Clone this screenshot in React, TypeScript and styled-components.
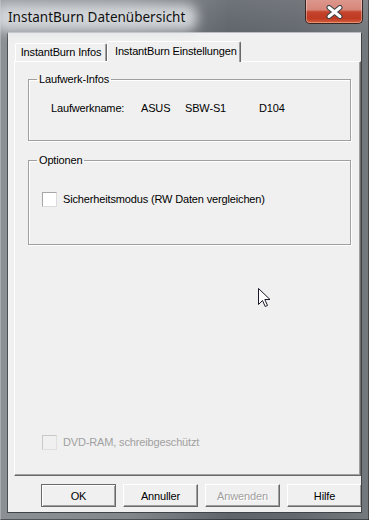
import React from "react";
import styled, { createGlobalStyle } from "styled-components";

const Global = createGlobalStyle`
  html, body { margin: 0; padding: 0; background: #6b7075; }
  * { box-sizing: border-box; }
`;

const Window = styled.div`
  position: relative;
  width: 369px;
  height: 520px;
  display: flex;
  flex-direction: column;
  padding: 0 7px 7px 7px;
  overflow: hidden;
  font-family: "Liberation Sans", Arial, sans-serif;
  font-size: 11px;
  letter-spacing: -0.15px;
  color: #000;
  background:
    linear-gradient(to bottom, rgba(255,255,255,0.10), rgba(255,255,255,0) 36px),
    linear-gradient(to right, #8b9095 0%, #82878c 35%, #5e646a 62%, #63686e 80%, #74797e 100%);
  box-shadow: inset 1px 0 0 rgba(255,255,255,0.25), inset -1px 0 0 rgba(0,0,0,0.4), inset 0 -1px 0 rgba(0,0,0,0.4);
`;

const TitleBar = styled.div`
  height: 32px;
  flex: none;
  display: flex;
  align-items: flex-start;
  justify-content: space-between;
`;

const Title = styled.div`
  position: relative;
  z-index: 0;
  margin-top: 8px;
  margin-left: 1px;
  font-family: "Noto Sans", "Open Sans", sans-serif;
  font-size: 13.5px;
  letter-spacing: 0;
  line-height: 18px;
  color: #111;
  white-space: nowrap;
  &::before {
    content: "";
    position: absolute;
    z-index: -1;
    left: -14px;
    right: -12px;
    top: -4px;
    bottom: -5px;
    background: rgba(214, 217, 220, 0.95);
    border-radius: 10px;
    filter: blur(6px);
  }
`;

const CloseButton = styled.div`
  width: 58px;
  height: 24px;
  margin-right: -1px;
  display: flex;
  align-items: center;
  justify-content: center;
  border: 1px solid #3a2420;
  border-top: none;
  border-radius: 0 0 5px 5px;
  background: linear-gradient(to bottom, #dc968b 0%, #d7877a 42%, #c4442c 52%, #bf3a22 80%, #d2603f 100%);
  box-shadow: inset 0 -1px 0 rgba(255,200,170,0.5), inset 1px 0 0 rgba(255,255,255,0.35), inset -1px 0 0 rgba(255,255,255,0.35);
`;

const Client = styled.div`
  flex: 1;
  display: flex;
  flex-direction: column;
  background: #f0f0f0;
  border: 1px solid #3f4449;
  border-top-color: #b9bcc0;
  border-left-color: #4a4f54;
  overflow: hidden;
  padding-top: 8px;
`;

const TabStrip = styled.div`
  display: flex;
  align-items: flex-end;
  height: 20px;
  padding-left: 7px;
  position: relative;
  z-index: 1;
`;

const Tab = styled.div<{ $active?: boolean; $w: number }>`
  height: ${(p) => (p.$active ? 21 : 18)}px;
  width: ${(p) => p.$w}px;
  display: flex;
  align-items: center;
  justify-content: ${(p) => (p.$active ? "flex-start" : "center")};
  padding-left: ${(p) => (p.$active ? 7 : 0)}px;
  padding-bottom: ${(p) => (p.$active ? 3 : 1)}px;
  background: #f0f0f0;
  border-top: 1px solid #fff;
  border-left: 1px solid #fff;
  border-right: 1px solid #696969;
  box-shadow: inset -1px 0 0 #a0a0a0;
  border-radius: 2px 2px 0 0;
  margin-bottom: ${(p) => (p.$active ? -1 : 0)}px;
  white-space: nowrap;
`;

const Panel = styled.div`
  margin-left: 6px;
  height: 415px;
  display: flex;
  flex-direction: column;
  padding: 0 9px 25px 13px;
  background: #f0f0f0;
  border-top: 1px solid #fff;
  border-left: 1px solid #fff;
  border-right: 1px solid #696969;
  border-bottom: 1px solid #696969;
  box-shadow: inset -1px -1px 0 #a0a0a0;
`;

const Group = styled.fieldset<{ $h: number; $mt: number }>`
  margin: ${(p) => p.$mt}px 0 0 0;
  padding: 0;
  min-width: 0;
  height: ${(p) => p.$h}px;
  flex: none;
  border: 1px solid #a0a0a0;
  box-shadow: 1px 1px 0 #fff, inset 1px 1px 0 #fff;
`;

const Legend = styled.legend`
  margin-left: 8px;
  padding: 0 2px;
  line-height: 13px;
`;

const InfoRow = styled.div`
  display: grid;
  grid-template-columns: 90px 44px 74px auto;
  margin: 16px 0 0 22px;
  line-height: 13px;
`;

const CheckRow = styled.label<{ $disabled?: boolean; $indent: number; $mt?: number }>`
  display: flex;
  align-items: center;
  gap: 6px;
  margin: ${(p) => p.$mt ?? 0}px 0 0 ${(p) => p.$indent}px;
  color: ${(p) => (p.$disabled ? "#a0a0a0" : "#000")};
  line-height: 13px;
`;

const Box = styled.span<{ $disabled?: boolean }>`
  width: 15px;
  height: 15px;
  flex: none;
  background: ${(p) => (p.$disabled ? "#f0f0f0" : "#fff")};
  border: 1px solid ${(p) => (p.$disabled ? "#c8c8c8" : "#a6a6a6")};
  border-right-color: ${(p) => (p.$disabled ? "#e0e0e0" : "#dcdcdc")};
  border-bottom-color: ${(p) => (p.$disabled ? "#e0e0e0" : "#dcdcdc")};
`;

const Spacer = styled.div`
  flex: 1;
`;

const ButtonRow = styled.div`
  display: flex;
  gap: 7px;
  padding-left: 33px;
  margin-top: 8px;
`;

const Button = styled.div<{ $default?: boolean; $disabled?: boolean }>`
  width: 75px;
  height: 23px;
  flex: none;
  display: flex;
  align-items: center;
  justify-content: center;
  background: #f0f0f0;
  color: ${(p) => (p.$disabled ? "#a0a0a0" : "#000")};
  border-top: 1px solid ${(p) => (p.$default ? "#696969" : "#fff")};
  border-left: 1px solid ${(p) => (p.$default ? "#696969" : "#fff")};
  border-right: 1px solid #696969;
  border-bottom: 1px solid #696969;
  box-shadow: ${(p) =>
    p.$default
      ? "inset 1px 1px 0 #fff, inset -1px -1px 0 #a0a0a0"
      : "inset -1px -1px 0 #a0a0a0"};
  text-shadow: ${(p) => (p.$disabled ? "1px 1px 0 #fff" : "none")};
`;

const Cursor = styled.svg`
  position: absolute;
  left: 258px;
  top: 288px;
`;

export default function App() {
  return (
    <>
      <Global />
      <Window>
        <TitleBar>
          <Title>InstantBurn Datenübersicht</Title>
          <CloseButton>
            <svg width="17" height="14" viewBox="0 0 17 14">
              <path d="M3 2.5 L14 11.5 M14 2.5 L3 11.5" stroke="#3b3f44" strokeWidth="5" strokeLinecap="round" />
              <path d="M3 2.5 L14 11.5 M14 2.5 L3 11.5" stroke="#fff" strokeWidth="3" strokeLinecap="round" />
            </svg>
          </CloseButton>
        </TitleBar>
        <Client>
          <TabStrip>
            <Tab $w={92}>InstantBurn Infos</Tab>
            <Tab $active $w={134}>InstantBurn Einstellungen</Tab>
          </TabStrip>
          <Panel>
            <Group $h={68} $mt={11}>
              <Legend>Laufwerk-Infos</Legend>
              <InfoRow>
                <span>Laufwerkname:</span>
                <span>ASUS</span>
                <span>SBW-S1</span>
                <span>D104</span>
              </InfoRow>
            </Group>
            <Group $h={91} $mt={13}>
              <Legend>Optionen</Legend>
              <CheckRow $indent={13} $mt={25}>
                <Box />
                <span>Sicherheitsmodus (RW Daten vergleichen)</span>
              </CheckRow>
            </Group>
            <Spacer />
            <CheckRow $disabled $indent={14}>
              <Box $disabled />
              <span>DVD-RAM, schreibgeschützt</span>
            </CheckRow>
          </Panel>
          <ButtonRow>
            <Button $default>OK</Button>
            <Button>Annuller</Button>
            <Button $disabled>Anwenden</Button>
            <Button>Hilfe</Button>
          </ButtonRow>
        </Client>
        <Cursor width="13" height="20" viewBox="0 0 13 20">
          <path d="M0.5 0.5 L0.5 16.5 L4.5 12.5 L7.2 18.5 L9.5 17.5 L6.8 11.5 L12 11.5 Z" fill="#fff" stroke="#1a1a2a" strokeWidth="1" strokeLinejoin="miter" />
        </Cursor>
      </Window>
    </>
  );
}
